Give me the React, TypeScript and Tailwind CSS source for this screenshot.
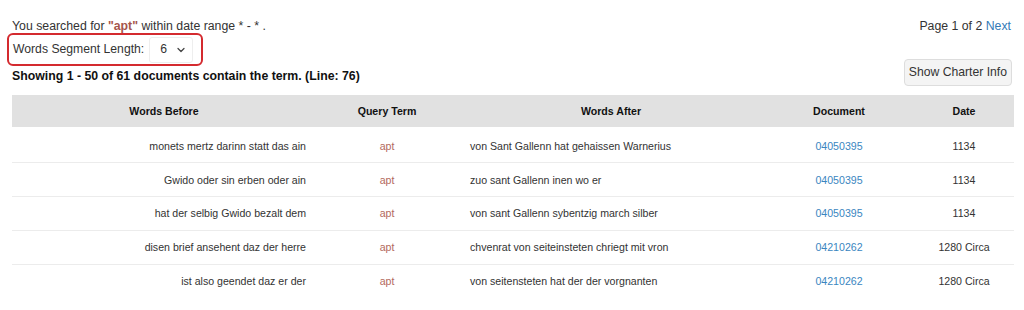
import { ChevronDown } from "lucide-react";

const rows = [
  { before: "monets mertz darinn statt das ain", after: "von Sant Gallenn hat gehaissen Warnerius", doc: "04050395", date: "1134" },
  { before: "Gwido oder sin erben oder ain", after: "zuo sant Gallenn inen wo er", doc: "04050395", date: "1134" },
  { before: "hat der selbig Gwido bezalt dem", after: "von sant Gallenn sybentzig march silber", doc: "04050395", date: "1134" },
  { before: "disen brief ansehent daz der herre", after: "chvenrat von seiteinsteten chriegt mit vron", doc: "04210262", date: "1280 Circa" },
  { before: "ist also geendet daz er der", after: "von seitensteten hat der der vorgnanten", doc: "04210262", date: "1280 Circa" },
];

// first rows sit a touch lower in their cells
const padTop = ["pt-[5px]", "pt-[3px]", "pt-[1px]", "pt-[1px]", "pt-[1px]"];

export default function App() {
  return (
    <div className="h-[310px] w-[1024px] bg-white px-3 pt-[16px] font-['Liberation_Sans',Arial,sans-serif] text-[#333]">
      <div className="flex h-5 items-center justify-between text-[12.3px]">
        <div>
          You searched for <span className="font-bold text-[#a5564c]">"apt"</span> within date range * - * .
        </div>
        <div className="pr-[1px]">
          Page 1 of 2 <a className="text-[#337ab7]">Next</a>
        </div>
      </div>

      <div className="flex items-end justify-between">
        <div className="flex flex-col">
          <div className="ml-[-5px] mt-[-3px] flex h-[33px] w-[196px] items-center gap-[5px] whitespace-nowrap rounded-[6px] border-2 border-[#d42a2f] pl-1 text-[12.2px]">
            <span>Words Segment Length:</span>
            <div className="flex h-[26px] w-[44px] items-center justify-between rounded-[3px] border border-[#eeeeee] bg-white pl-[10px] pr-[5px]">
              <span>6</span>
              <ChevronDown size={12} strokeWidth={2.5} className="text-[#444]" />
            </div>
          </div>
          <div className="py-[1px] text-[12.3px] font-bold leading-[18px] text-[#111]">
            Showing 1 - 50 of 61 documents contain the term. (Line: 76)
          </div>
        </div>
        <button className="h-[27px] rounded-[4px] border border-[#dddddd] bg-[#f4f4f4] px-[4px] text-[12.2px] text-[#333]">
          Show Charter Info
        </button>
      </div>

      <table className="mt-[9px] w-[1002px] table-fixed border-collapse text-[10.6px]">
        <colgroup>
          <col className="w-[304px]" />
          <col className="w-[142px]" />
          <col className="w-[306px]" />
          <col className="w-[150px]" />
          <col className="w-[100px]" />
        </colgroup>
        <thead>
          <tr className="h-[32px] bg-[#e1e1e1] font-bold text-[#111]">
            <th className="pt-[1px] text-center">Words Before</th>
            <th className="pt-[1px] text-center">Query Term</th>
            <th className="pt-[1px] text-center">Words After</th>
            <th className="pt-[1px] text-center">Document</th>
            <th className="pt-[1px] text-center">Date</th>
          </tr>
        </thead>
        <tbody>
          {rows.map((r, i) => (
            <tr key={i} className={i === 0 ? "h-[35px] border-b border-[#ececec]" : i === rows.length - 1 ? "h-[34px]" : "h-[34px] border-b border-[#ececec]"}>
              <td className={`pr-[10px] text-right ${padTop[i]}`}>{r.before}</td>
              <td className={`text-center text-[#b3685d] ${padTop[i]}`}>apt</td>
              <td className={`pl-[12px] text-left ${padTop[i]}`}>{r.after}</td>
              <td className={`text-center text-[#3a86bf] ${padTop[i]}`}>{r.doc}</td>
              <td className={`text-center ${padTop[i]}`}>{r.date}</td>
            </tr>
          ))}
        </tbody>
      </table>
    </div>
  );
}
